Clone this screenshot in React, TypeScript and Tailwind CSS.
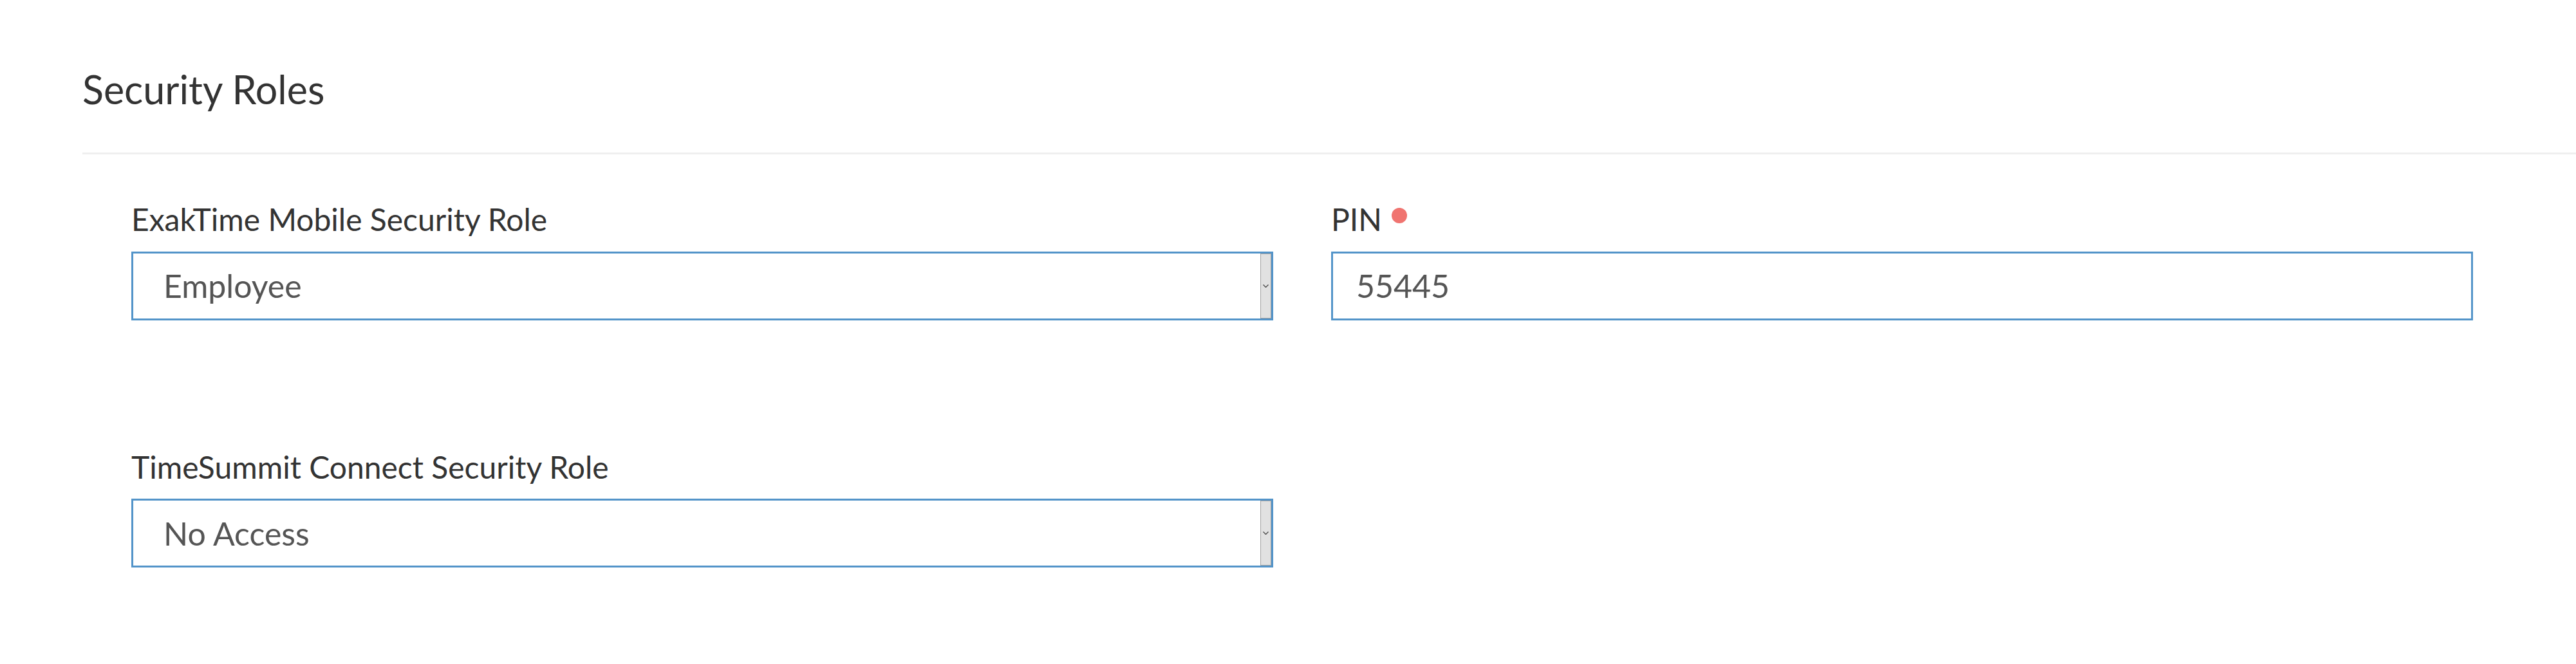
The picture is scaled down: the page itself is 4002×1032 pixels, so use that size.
import React from 'react';

interface SelectBoxProps {
    value: string;
}

const SelectBox: React.FC<SelectBoxProps> = ({ value }) => {
    return (
        <div className="flex h-[107px] w-full border-[3px] border-[#5394c9] bg-white">
            <span className="flex flex-1 items-center pl-[47px] text-[50px] leading-[60px] text-[#555555]">{value}</span>
            <div className="flex w-[17px] items-center justify-center border border-[#a3a3a3] bg-[#e1e1e1]">
                <svg width="9" height="5" viewBox="0 0 9 5" fill="none">
                    <path d="M0.5 0.5 L4.5 4.5 L8.5 0.5" stroke="#474747" strokeWidth="1.3" />
                </svg>
            </div>
        </div>
    );
};

export default function App() {
    return (
        <div className="min-h-[1032px] w-[4002px] bg-white font-['Lato',sans-serif] text-[#333333]">
            <div className="ml-[128px]">
                <div className="border-b-[3px] border-[#efefef] pt-[102px] pb-[62px]">
                    <h2 className="text-[61px] font-normal leading-[73px] text-[#333333]">Security Roles</h2>
                </div>

                <div className="grid grid-cols-[1774px_1774px] gap-x-[90px] gap-y-[199px] pl-[76px] pt-[72px]">
                    <div>
                        <label className="block text-[48px] leading-[57.6px] text-[#333333]">ExakTime Mobile Security Role</label>
                        <div className="mt-[21px]">
                            <SelectBox value="Employee" />
                        </div>
                    </div>

                    <div>
                        <div className="flex items-start">
                            <label className="block text-[48px] leading-[57.6px] text-[#333333]">PIN</label>
                            <span className="ml-[15px] mt-[11px] h-[24px] w-[24px] rounded-full bg-[#f07470]"></span>
                        </div>
                        <div className="mt-[21px] flex h-[107px] items-center border-[3px] border-[#5394c9] bg-white pl-[36px]">
                            <span className="text-[50px] leading-[60px] text-[#555555]">55445</span>
                        </div>
                    </div>

                    <div>
                        <label className="block text-[48px] leading-[57.6px] text-[#333333]">TimeSummit Connect Security Role</label>
                        <div className="mt-[21px]">
                            <SelectBox value="No Access" />
                        </div>
                    </div>
                </div>
            </div>
        </div>
    );
}
